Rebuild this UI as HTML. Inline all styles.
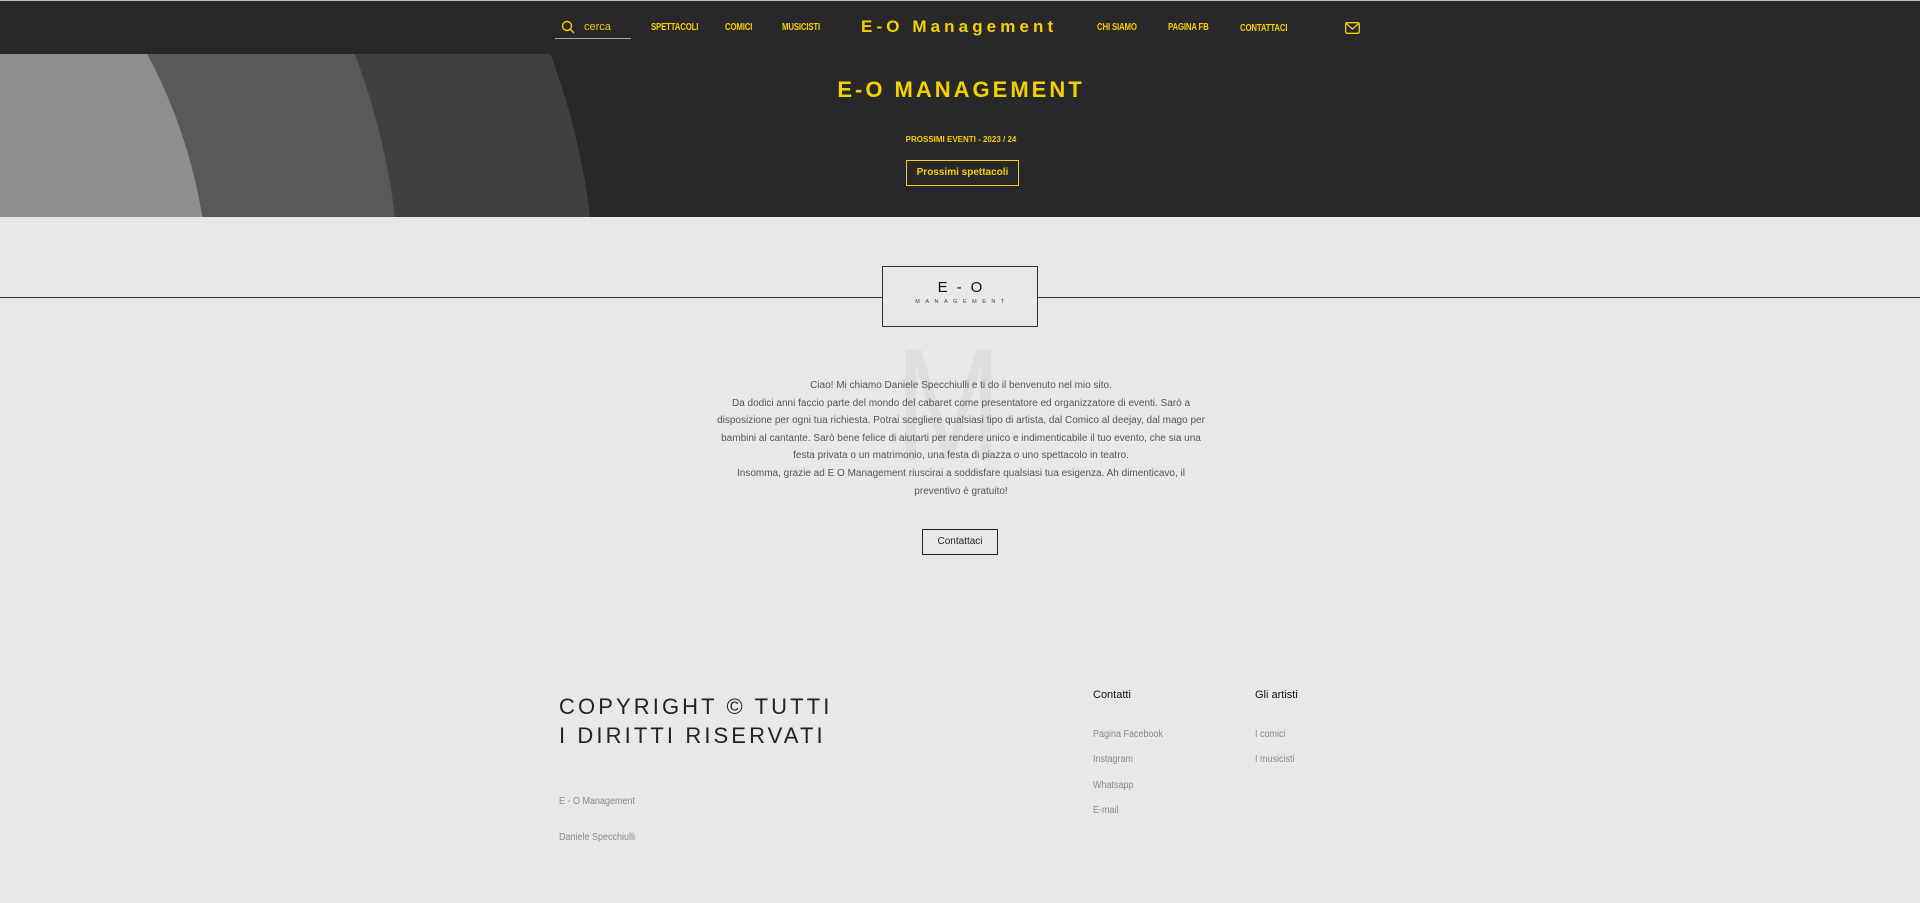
<!DOCTYPE html>
<html><head><meta charset="utf-8"><style>
*{margin:0;padding:0;box-sizing:border-box}
html,body{width:1920px;height:903px;overflow:hidden}
body{background:#e8e8e8;font-family:"Liberation Sans",sans-serif;position:relative}
.abs{position:absolute;white-space:nowrap}
header{position:absolute;left:0;top:0;width:1920px;height:54px;background:#28282a;border-top:1px solid #bbb}
.nav{position:absolute;top:21px;font-size:10px;font-weight:bold;color:#f5d000;letter-spacing:-0.2px;transform:scaleX(0.78);transform-origin:left}
.hero{position:absolute;left:0;top:54px;width:1920px;height:163px;background:#28282a;overflow:hidden}
.y{color:#f5d000}
p.txt{position:absolute;left:716px;top:377px;width:490px;text-align:center;font-size:10px;line-height:17.6px;color:#555;white-space:normal}
.fl{font-size:10px;color:#8a8a8a;transform:scaleX(0.9);transform-origin:left}
</style></head><body>
<header>
<svg class="abs" style="left:561px;top:19px" width="14" height="14" viewBox="0 0 14 14"><circle cx="6" cy="6" r="4.5" fill="none" stroke="#f5d000" stroke-width="1.4"/><line x1="9.3" y1="9.3" x2="13" y2="13" stroke="#f5d000" stroke-width="1.4"/></svg>
<div class="abs" style="left:584px;top:20px;font-size:11px;color:#f5d000">cerca</div>
<div class="abs" style="left:555px;top:37px;width:76px;height:1px;background:#aaa"></div>
<div class="nav abs" style="left:651px">SPETTACOLI</div>
<div class="nav abs" style="left:725px">COMICI</div>
<div class="nav abs" style="left:782px">MUSICISTI</div>
<div class="abs" style="left:861px;top:16px;font-size:17px;font-weight:bold;color:#f5d000;letter-spacing:4.1px">E-O Management</div>
<div class="nav abs" style="left:1097px">CHI SIAMO</div>
<div class="nav abs" style="left:1168px">PAGINA FB</div>
<div class="nav abs" style="left:1240px;top:22px">CONTATTACI</div>
<svg class="abs" style="left:1345px;top:21px" width="15" height="12" viewBox="0 0 15 12"><rect x="0.7" y="0.7" width="13.6" height="10.6" rx="1.5" fill="none" stroke="#f5d000" stroke-width="1.3"/><path d="M1.5 1.8 L7.5 7 L13.5 1.8" fill="none" stroke="#f5d000" stroke-width="1.3"/></svg>
</header>
<div class="hero">
<svg class="abs" style="left:0;top:0" width="700" height="163" viewBox="0 54 700 163">
<circle cx="-105" cy="300" r="700" fill="#404042"/>
<circle cx="-290" cy="300" r="690" fill="#59595b"/>
<circle cx="-311" cy="300" r="520" fill="#8f8f8f"/>
</svg>
<div class="abs y" style="left:0;width:1922px;text-align:center;top:23px;font-size:22px;font-weight:bold;letter-spacing:3px">E-O MANAGEMENT</div>
<div class="abs y" style="left:0;width:1922px;text-align:center;top:81px;font-size:8px;font-weight:bold">PROSSIMI EVENTI - 2023 / 24</div>
<div class="abs y" style="left:906px;top:106px;width:113px;height:26px;border:1.5px solid #f5d000;font-size:10px;font-weight:bold;text-align:center;line-height:23px">Prossimi spettacoli</div>
</div>
<div class="abs" style="left:0;top:297px;width:1920px;height:1px;background:#333"></div>
<div class="abs" style="left:882px;top:266px;width:156px;height:61px;border:1px solid #333;background:#e8e8e8;text-align:center">
<div style="margin-top:12px;font-size:15px;letter-spacing:9px;color:#111;padding-left:9px">E-O</div>
<div style="margin-top:3px;font-size:5.5px;letter-spacing:5.5px;color:#444;padding-left:5px">MANAGEMENT</div>
</div>
<div class="abs" style="left:895px;top:325px;font-size:160px;color:#dedede;line-height:160px;transform:scaleX(0.8);transform-origin:left">M</div>
<p class="txt">Ciao! Mi chiamo Daniele Specchiulli e ti do il benvenuto nel mio sito.<br>Da dodici anni faccio parte del mondo del cabaret come presentatore ed organizzatore di eventi. Sarò a disposizione per ogni tua richiesta. Potrai scegliere qualsiasi tipo di artista, dal Comico al deejay, dal mago per bambini al cantante. Sarò bene felice di aiutarti per rendere unico e indimenticabile il tuo evento, che sia una festa privata o un matrimonio, una festa di piazza o uno spettacolo in teatro.<br>Insomma, grazie ad E O Management riuscirai a soddisfare qualsiasi tua esigenza. Ah dimenticavo, il preventivo è gratuito!</p>
<div class="abs" style="left:922px;top:529px;width:76px;height:26px;border:1px solid #222;font-size:10px;text-align:center;line-height:24px;color:#222">Contattaci</div>
<div class="abs" style="left:559px;top:692px;font-size:22px;letter-spacing:3.1px;line-height:29px;color:#222">COPYRIGHT © TUTTI<br>I DIRITTI RISERVATI</div>
<div class="abs fl" style="left:559px;top:796px">E - O Management</div>
<div class="abs fl" style="left:559px;top:832px">Daniele Specchiulli</div>
<div class="abs" style="left:1093px;top:689px;font-size:11px;color:#111">Contatti</div>
<div class="abs" style="left:1255px;top:689px;font-size:11px;color:#111">Gli artisti</div>
<div class="abs fl" style="left:1093px;top:729px">Pagina Facebook</div>
<div class="abs fl" style="left:1093px;top:754px">Instagram</div>
<div class="abs fl" style="left:1093px;top:780px">Whatsapp</div>
<div class="abs fl" style="left:1093px;top:805px">E-mail</div>
<div class="abs fl" style="left:1255px;top:729px">I comici</div>
<div class="abs fl" style="left:1255px;top:754px">I musicisti</div>
</body></html>
